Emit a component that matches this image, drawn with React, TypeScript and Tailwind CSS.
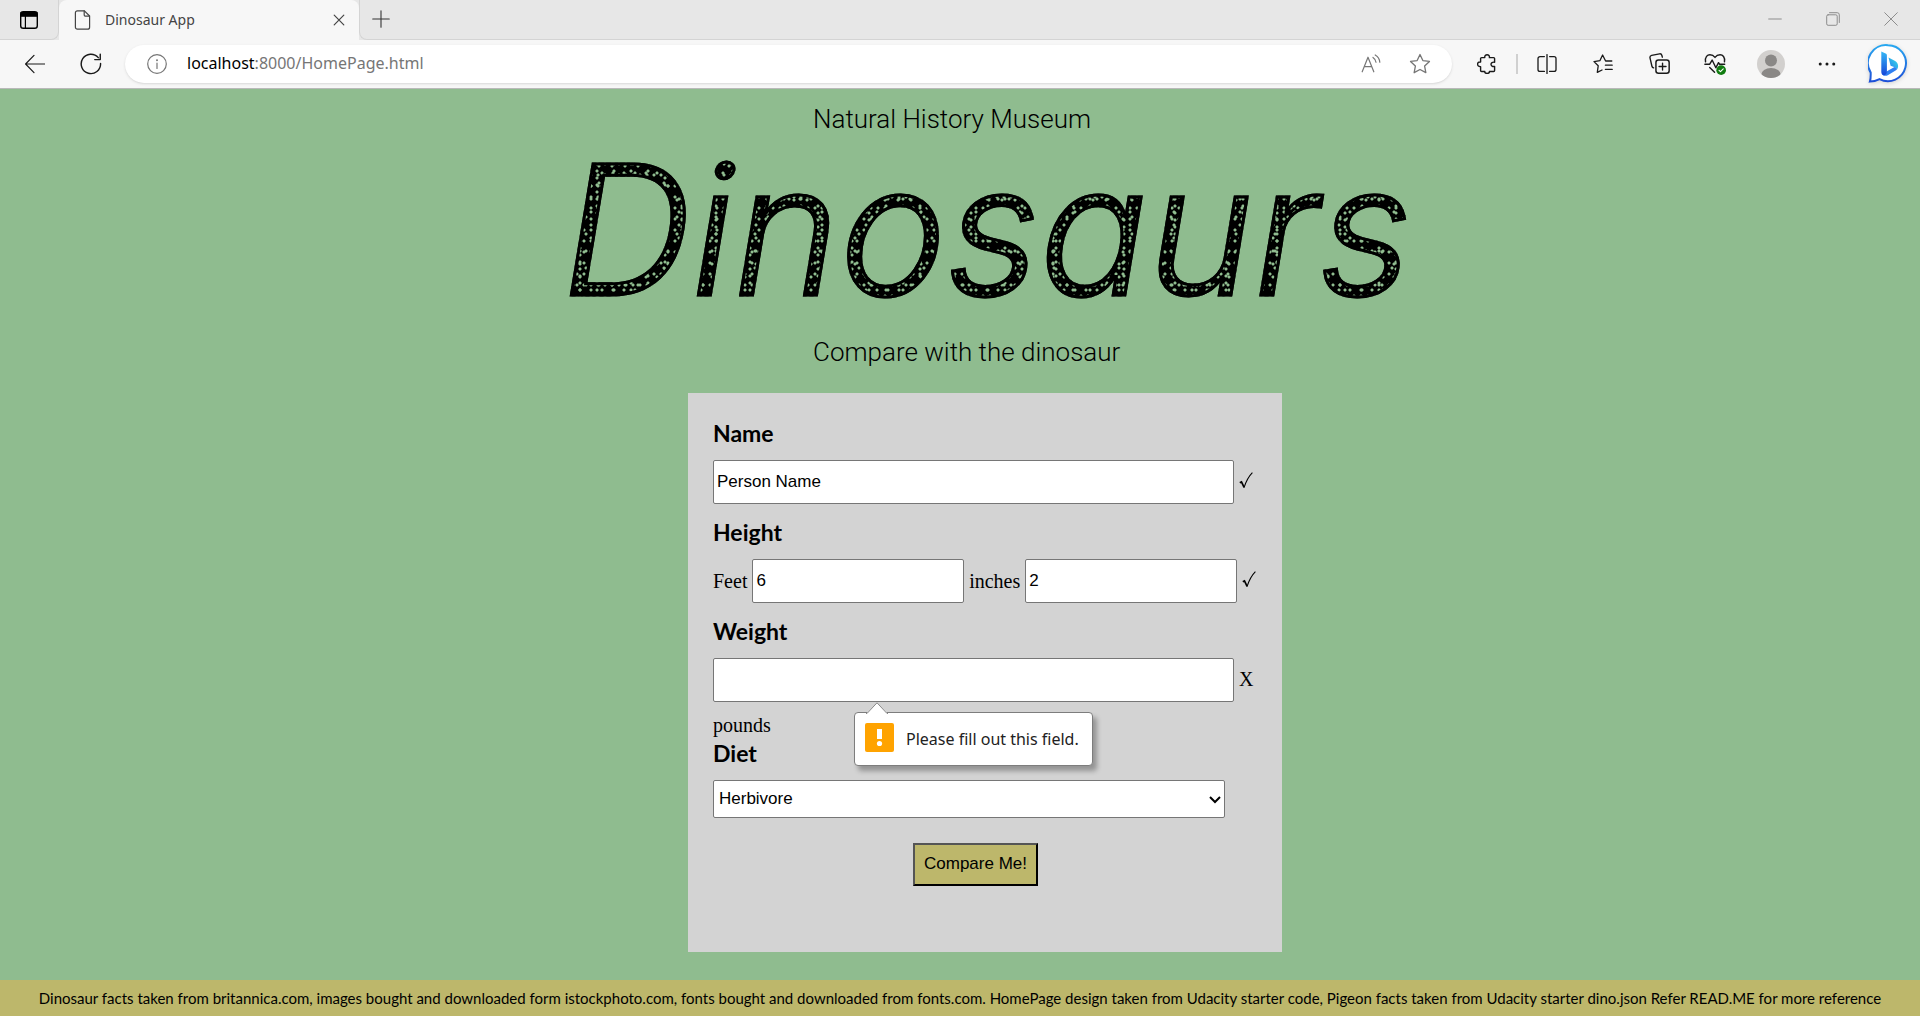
import type { ReactNode } from "react";

const speckle =
  "bg-[radial-gradient(circle_at_2px_2px,#8fbc8f_1px,transparent_2px),radial-gradient(circle_at_4px_7px,#8fbc8f_1px,transparent_2px),radial-gradient(circle_at_9px_3px,#8fbc8f_1px,transparent_2px),radial-gradient(circle_at_6px_9px,#8fbc8f_1px,transparent_2px),linear-gradient(#000,#000)] bg-[size:7px_11px,11px_13px,17px_7px,13px_17px,auto]";

function Icon({ children, label, size = 20, className = "" }: { children: ReactNode; label: string; size?: number; className?: string }) {
  return (
    <svg width={size} height={size} viewBox="0 0 20 20" fill="none" stroke="currentColor" strokeWidth="1.2" strokeLinecap="round" strokeLinejoin="round" role="img" aria-label={label} className={className}>
      {children}
    </svg>
  );
}

function ToolButton({ children, wide = false }: { children: ReactNode; wide?: boolean }) {
  return (
    <button type="button" className={wide ? "flex h-10 w-16 shrink-0 items-center justify-center" : "flex h-10 w-14 shrink-0 items-center justify-center"}>
      {children}
    </button>
  );
}

function WindowButton({ children }: { children: ReactNode }) {
  return (
    <button type="button" className="flex h-9 w-[58px] shrink-0 items-center justify-center">
      {children}
    </button>
  );
}

function TitleBar() {
  return (
    <div className="flex h-10 items-stretch bg-[#e7e7e7]">
      <div className="flex w-[59px] items-center justify-center rounded-br-lg border-r border-b border-[#d4d4d4]">
        <button type="button" className="flex">
          <Icon label="Tab actions" size={20}>
            <rect x="1.7" y="1.7" width="16.6" height="16.6" rx="2.6" strokeWidth="1.4" />
            <path d="M2 2.6h16v3.6H2z" fill="currentColor" />
            <path d="M6.4 6v12" />
          </Icon>
        </button>
      </div>
      <div className="flex w-[300px] items-center rounded-t-lg bg-[#f7f7f7] pr-3 pl-[14px] text-[#444]">
        <Icon label="Page" size={20}>
          <path d="M4.4.8h7l5.2 5.2v11.2a2 2 0 0 1-2 2H4.4a2 2 0 0 1-2-2V2.8a2 2 0 0 1 2-2z" />
          <path d="M11.2.9v4.2a1 1 0 0 0 1 1h4.3" />
        </Icon>
        <span className="flex-1 pb-0.5 pl-3 font-['Noto_Sans'] text-[14px]">Dinosaur App</span>
        <button type="button" className="flex">
          <Icon label="Close tab" size={16}>
            <path d="M4 4l12 12M16 4L4 16" strokeWidth="1.5" />
          </Icon>
        </button>
      </div>
      <div className="flex flex-1 items-center justify-between rounded-bl-lg border-b border-l border-[#d4d4d4] pb-px pl-3">
        <button type="button" className="flex text-[#333]">
          <Icon label="New tab" size={18}>
            <path d="M10 .8v18.4M.8 10h18.4" />
          </Icon>
        </button>
        <div className="flex text-[#8a8a8a]">
          <WindowButton>
            <Icon label="Minimize" size={14}>
              <path d="M1 10h18" strokeWidth="1.4" />
            </Icon>
          </WindowButton>
          <WindowButton>
            <Icon label="Restore" size={14}>
              <rect x="1" y="4" width="15" height="15" rx="2" strokeWidth="1.4" />
              <path d="M5 1h11a3 3 0 0 1 3 3v11" strokeWidth="1.4" />
            </Icon>
          </WindowButton>
          <WindowButton>
            <Icon label="Close" size={14}>
              <path d="M1 1l18 18M19 1L1 19" strokeWidth="1.4" />
            </Icon>
          </WindowButton>
        </div>
      </div>
    </div>
  );
}

function Toolbar() {
  return (
    <div className="flex h-[49px] items-center border-b border-[#b9b9b9] bg-[#f7f7f7] pr-px pb-px pl-[7px] text-[#1a1a1a]">
      <ToolButton>
        <Icon label="Back" size={20}>
          <path d="M19.5 10H.7M9 1.4L.6 10 9 18.6" />
        </Icon>
      </ToolButton>
      <ToolButton>
        <Icon label="Refresh" size={22}>
          <path d="M18.7 9.6A8.8 8.8 0 1 1 16.6 4.2" strokeWidth="1.3" />
          <path d="M18.4 1v5h-5" strokeWidth="1.3" />
        </Icon>
      </ToolButton>
      <div className="ml-1.5 flex h-[38px] flex-1 items-center rounded-full bg-white pl-[22px] text-[#767676] shadow-sm">
        <Icon label="Site information" size={20}>
          <circle cx="10" cy="10" r="9.3" />
          <path d="M10 9v5.4" />
          <circle cx="10" cy="6.2" r=".4" fill="currentColor" />
        </Icon>
        <div className="flex-1 pb-0.5 pl-5 font-['Noto_Sans'] text-[16px]">
          <span className="text-black">localhost</span>:8000/HomePage.html
        </div>
        <button type="button" className="mr-7 flex">
          <Icon label="Read aloud" size={20}>
            <path d="M1.2 17.8L7 3.2l5.8 14.6M3.2 12.6h7.6" />
            <path d="M12 3.4c1.800 1.200 2.800 2.800 3 4.800M14.200 1c2.800 1.600 4.400 4.200 4.600 7.200" />
          </Icon>
        </button>
        <button type="button" className="mr-[21px] flex">
          <Icon label="Add to favorites" size={22}>
            <path d="M10 1.400l2.600 5.500 6 .8-4.400 4.200 1.100 6L10 15l-5.300 2.900 1.100-6L1.400 7.700l6-.8z" />
          </Icon>
        </button>
      </div>
      <div className="ml-[7px] flex items-center">
        <ToolButton>
          <Icon label="Extensions" size={20}>
            <path d="M4.600 3.600h3.200c-.3-1.800.8-2.900 2.300-2.900s2.600 1.100 2.300 2.900h4.200c.6 0 1 .4 1 1v3.600c-2.200-.4-3.600.6-3.600 2.100s1.400 2.500 3.600 2.100v4.100c0 .6-.4 1-1 1h-4.200c.3 1-.8 2-2.300 2s-2.600-1-2.300-2H4.600c-.6 0-1-.4-1-1v-3.800C1.700 12.800.6 11.700.6 10.200s1.100-2.500 3-2.200V4.600c0-.6.4-1 1-1z" strokeWidth="1.400" />
          </Icon>
        </ToolButton>
        <div className="mx-px h-5 w-0.5 bg-[#d0d0d0]" />
        <ToolButton>
          <Icon label="Split screen" size={20}>
            <path d="M7.400 2.600H3a2 2 0 0 0-2 2v10.800a2 2 0 0 0 2 2h4.400M12.600 2.600H17a2 2 0 0 1 2 2v10.800a2 2 0 0 1-2 2h-4.400M10 .6v18.800" strokeWidth="1.300" />
          </Icon>
        </ToolButton>
        <ToolButton>
          <Icon label="Favorites" size={20}>
            <path d="M18.800 7h-6.200L9.600 1 7 6.600l-6 1 4.200 4.200-.9 6.600L9 16M12.400 11.200h6.800M12.400 15.400h6.800" strokeWidth="1.300" />
          </Icon>
        </ToolButton>
        <ToolButton>
          <Icon label="Collections" size={21}>
            <rect x="6.600" y="6.600" width="12.600" height="12.600" rx="2.400" strokeWidth="1.400" />
            <path d="M12.900 9.600v6.600M9.600 12.900h6.600M4.400 14.200c-.9-.2-1.400-.8-1.600-1.600L1 4.800c-.3-1.200.3-2.200 1.500-2.500L10 .8c1.200-.2 2 .4 2.300 1.600l.4 1.600" strokeWidth="1.300" />
          </Icon>
        </ToolButton>
        <ToolButton>
          <Icon label="Browser essentials" size={22}>
            <path d="M1.400 8C.7 3.400 3.200 1.600 5.400 1.600c2 0 3.400.8 4.600 2.400 1.200-1.600 2.600-2.400 4.600-2.400 2.400 0 4.700 2 4 6.400M.8 10.200h4.400l2.200-3.800 3.400 7 2.400-4.600 1 1.400h4.600M5.200 13.200l4.400 4.400" strokeWidth="1.300" />
            <circle cx="15.600" cy="15.600" r="4.400" fill="#107c10" stroke="none" />
            <path d="M13.700 15.700l1.300 1.300 2.500-2.500" stroke="#fff" strokeWidth="1" />
          </Icon>
        </ToolButton>
        <ToolButton>
          <svg width="28" height="28" viewBox="0 0 28 28" role="img" aria-label="Profile">
            <defs>
              <clipPath id="avatar-clip">
                <circle cx="14" cy="14" r="14" />
              </clipPath>
            </defs>
            <circle cx="14" cy="14" r="14" fill="#d2d0ce" />
            <g clipPath="url(#avatar-clip)" fill="#8a8886">
              <circle cx="14" cy="10.500" r="6" />
              <ellipse cx="14" cy="25" rx="9.800" ry="7" />
            </g>
          </svg>
        </ToolButton>
        <ToolButton>
          <Icon label="Settings and more" size={18}>
            <g fill="currentColor" stroke="none">
              <circle cx="2.500" cy="10" r="1.700" />
              <circle cx="10" cy="10" r="1.700" />
              <circle cx="17.500" cy="10" r="1.700" />
            </g>
          </Icon>
        </ToolButton>
        <ToolButton wide>
          <svg width="39" height="39" viewBox="0 0 39 39" role="img" aria-label="Bing" className="drop-shadow-sm">
            <defs>
              <linearGradient id="bing-ring" x1="0" y1="0" x2="0" y2="1">
                <stop offset="0" stopColor="#28a8f0" />
                <stop offset="1" stopColor="#1d4fd8" />
              </linearGradient>
              <linearGradient id="bing-stem" x1="0" y1="0" x2="0" y2="1">
                <stop offset="0" stopColor="#35b8f6" />
                <stop offset="1" stopColor="#1746d8" />
              </linearGradient>
              <linearGradient id="bing-bowl" x1="1" y1="0" x2="0" y2="1">
                <stop offset="0" stopColor="#35dfe6" />
                <stop offset="1" stopColor="#2a7cf0" />
              </linearGradient>
            </defs>
            <path d="M20 1.200a18 18 0 1 1-8.500 33.900c-3 1.500-6 2.400-9.600 2.500 1-3 .8-5.500.8-9A18 18 0 0 1 20 1.200z" fill="#fff" stroke="url(#bing-ring)" strokeWidth="2" />
            <path d="M20.500 13.500l6.200 3.200c2.200 1.200 3.400 3 3.400 5.300 0 1.500-.5 2.800-1.300 3.800-.6-1.400-1.500-2.200-2.800-2.700l-3.400-1.400z" fill="url(#bing-bowl)" />
            <path d="M14 30l12.500-7c1.200.5 2 1.400 2.300 2.800l-8.600 5.200c-2.600 1.500-5 1-6.200-1z" fill="#2f7ff2" />
            <path d="M13.300 7.500l4.300 2c.9.400 1.300 1 1.300 2V27c0 2.500-1 4-2.700 4.200-1.800.1-2.900-1.200-2.900-3.200z" fill="url(#bing-stem)" />
          </svg>
        </ToolButton>
      </div>
    </div>
  );
}

const labelClass = "mb-[11px] block font-['Lato'] text-[23px] font-bold leading-8";
const inputClass = "h-11 min-w-0 flex-1 rounded-[2px] border border-[#767676] bg-white px-[3px] font-['Liberation_Sans'] text-[17px] text-black outline-none";

function CheckMark() {
  return (
    <svg width="14" height="17" viewBox="0 0 14 17" fill="none" stroke="#000" role="img" aria-label="Valid">
      <path d="M.8 10.800l1.700-.9 2.600 5.400" strokeWidth="1.700" />
      <path d="M5 15.600C7 9.500 9.500 4.500 13.400.6" strokeWidth="1.100" />
    </svg>
  );
}

function ValidationBubble() {
  return (
    <div role="alert" className="absolute top-[54px] left-[141px] z-10 flex h-[54px] items-center rounded border border-[#7d7d7d] bg-white pr-[13px] pl-[10px] shadow-[4px_5px_5px_rgba(0,0,0,0.3)]">
      <svg width="22" height="12" viewBox="0 0 22 12" className="absolute -top-[11px] left-[11px]" aria-hidden="true">
        <path d="M0 12L11 .8 22 12z" fill="#fff" />
        <path d="M0 11.500h1L11 .8l10 10.700h1" fill="none" stroke="#8a8a8a" />
      </svg>
      <svg width="29" height="29" viewBox="0 0 29 29" aria-hidden="true" className="mb-1">
        <rect width="29" height="29" rx="2" fill="#ffa300" />
        <path d="M12 6h5v10h-5z" fill="#fff" />
        <circle cx="14.500" cy="20.500" r="2.600" fill="#fff" />
      </svg>
      <span className="pl-3 font-['Noto_Sans'] text-[16px] whitespace-nowrap text-[#222]">Please fill out this field.</span>
    </div>
  );
}

function DinoForm() {
  return (
    <form noValidate className="mx-auto w-[594px] bg-[#d3d3d3] pt-6 pr-6 pb-[66px] pl-[25px] font-['Liberation_Serif'] text-[20px]">
      <label htmlFor="name" className={labelClass}>Name</label>
      <div className="mb-3 flex items-center gap-[5px]">
        <input id="name" type="text" defaultValue="Person Name" className={inputClass} />
        <span className="w-[19px] pb-1"><CheckMark /></span>
      </div>
      <h2 className={labelClass}>Height</h2>
      <div className="mb-3 flex items-center gap-[5px]">
        <label htmlFor="feet">Feet</label>
        <input id="feet" type="text" defaultValue="6" className={inputClass} />
        <label htmlFor="inches">inches</label>
        <input id="inches" type="text" defaultValue="2" className={inputClass} />
        <span className="w-4 pb-1"><CheckMark /></span>
      </div>
      <label htmlFor="weight" className={labelClass}>Weight</label>
      <div className="relative mb-[11px] flex items-center gap-[5px]">
        <input id="weight" type="text" required className={inputClass} />
        <span className="w-[19px] pb-0.5">X</span>
        <ValidationBubble />
      </div>
      <p className="leading-6">pounds</p>
      <label htmlFor="diet" className={labelClass}>Diet</label>
      <div className="relative mr-[33px]">
        <select id="diet" defaultValue="Herbivore" className="block h-[38px] w-full appearance-none rounded-[2px] border border-[#767676] bg-white px-[5px] font-['Liberation_Sans'] text-[17px] text-black">
          <option>Herbivore</option>
          <option>Omnivore</option>
          <option>Carnivore</option>
        </select>
        <svg width="12" height="8" viewBox="0 0 12 8" className="pointer-events-none absolute top-4 right-1" fill="none" stroke="#000" strokeWidth="2" aria-hidden="true">
          <path d="M1 1l5 5 5-5" />
        </svg>
      </div>
      <div className="mt-[25px] flex justify-center pr-5">
        <button type="button" className="h-[43px] border-2 border-t-[#555] border-r-black border-b-black border-l-[#555] bg-[#bdb76b] px-[9px] pb-0.5 font-['Liberation_Sans'] text-[17px] text-black">
          Compare Me!
        </button>
      </div>
    </form>
  );
}

export default function App() {
  return (
    <div className="flex min-h-screen flex-col bg-[#8fbc8f] text-black">
      <header>
        <TitleBar />
        <Toolbar />
      </header>
      <main className="flex-1 pb-7 pl-[50px]">
        <p className="mx-auto w-[344px] pt-3 font-['Roboto'] text-[26px] leading-9 font-light whitespace-nowrap">Natural History Museum</p>
        <h1 className="mt-[3px] pl-1 text-center font-['Inter'] text-[180px] leading-[180px] font-light whitespace-nowrap italic">
          <span className={`${speckle} inline-block bg-clip-text px-2 align-top text-transparent [-webkit-text-stroke:3px_#000]`}>Dinosaurs</span>
        </h1>
        <p className="mx-auto mt-[14px] mb-[23px] w-[344px] font-['Roboto'] text-[26px] leading-9 font-light whitespace-nowrap">Compare with the dinosaur</p>
        <DinoForm />
      </main>
      <footer className="h-9 bg-[#bdb76b] text-center font-['Lato'] text-[15px] leading-9 whitespace-nowrap">
        Dinosaur facts taken from britannica.com, images bought and downloaded form istockphoto.com, fonts bought and downloaded from fonts.com. HomePage design taken from Udacity starter code, Pigeon facts taken from Udacity starter dino.json Refer READ.ME for more reference
      </footer>
    </div>
  );
}
